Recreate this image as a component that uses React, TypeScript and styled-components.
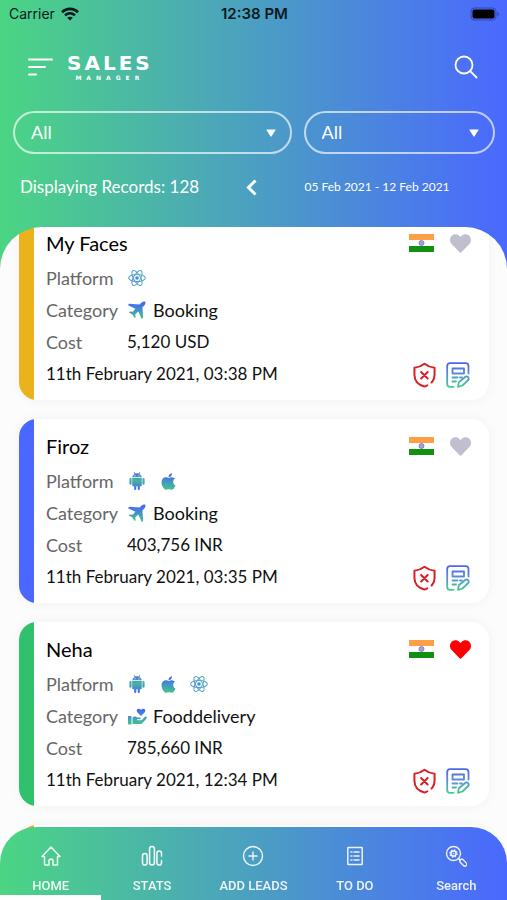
import React, { useLayoutEffect, useRef } from "react";
import styled, { createGlobalStyle } from "styled-components";
import { FaApple, FaHeart } from "react-icons/fa";

const GlobalStyle = createGlobalStyle`
  *, *::before, *::after { box-sizing: border-box; }
  body { margin: 0; }
  button, select { font: inherit; color: inherit; }
`;

const brandGradient = "linear-gradient(90deg, #4bd583 0%, #4b9dc4 52%, #4a68ff 100%)";
const textFont = `Lato, "Noto Sans", sans-serif`;
const systemFont = `Inter, "Liberation Sans", sans-serif`;

const Screen = styled.div`
  display: flex;
  flex-direction: column;
  height: 100vh;
  background: ${brandGradient};
  font-family: ${textFont};
  color: #111;
`;

const StatusBar = styled.div`
  display: grid;
  grid-template-columns: 1fr auto 1fr;
  align-items: center;
  height: 28px;
  padding: 0 7px 0 9px;
  font: 400 14px/20px ${systemFont};
  color: #0b1a20;
`;

const Carrier = styled.span`
  display: flex;
  align-items: center;
  gap: 6px;
`;

const Clock = styled.time`
  font-size: 15px;
  font-weight: 600;
`;

const BatterySlot = styled.span`
  display: flex;
  justify-content: flex-end;
`;

const BrandRow = styled.header`
  display: flex;
  align-items: center;
  height: 78px;
  padding: 0 29px 0 28px;
  color: #fff;
`;

const IconButton = styled.button`
  display: flex;
  padding: 0;
  border: 0;
  background: none;
  cursor: pointer;
`;

const Logo = styled.div`
  display: flex;
  flex-direction: column;
  align-items: center;
  margin: 0 auto 0 14px;
  font-family: "DejaVu Sans", sans-serif;
  font-weight: 700;
`;

const LogoName = styled.span`
  font-size: 20px;
  line-height: 22px;
  letter-spacing: 3px;
`;

const LogoTag = styled.span`
  font-size: 6px;
  line-height: 8px;
  letter-spacing: 5px;
`;

const TwoColumns = styled.div`
  display: grid;
  grid-template-columns: 16fr 11fr;
  column-gap: 12px;
  padding: 0 12px 0 13px;
  color: #fff;
`;

const FilterRow = styled(TwoColumns)`
  padding-top: 5px;
`;

const InfoRow = styled(TwoColumns)`
  align-items: center;
  height: 66px;
  margin-bottom: 7px;
`;

const Filter = styled.label`
  display: grid;
  align-items: center;
  > * { grid-area: 1 / 1; }
  > svg {
    justify-self: end;
    margin-right: 16px;
    pointer-events: none;
  }
`;

const FilterSelect = styled.select`
  appearance: none;
  width: 100%;
  height: 43px;
  padding: 0 16px 2px;
  border: 2px solid rgba(255, 255, 255, 0.65);
  border-radius: 22px;
  background: transparent;
  font-size: 18px;
  line-height: 24px;
  cursor: pointer;
  option { color: #111; }
`;

const Records = styled.div`
  display: flex;
  align-items: center;
  justify-content: space-between;
  padding: 0 35px 0 7px;
  font-size: 17px;
  line-height: 24px;
`;

const DateRange = styled.div`
  padding-left: 1px;
  font-size: 12px;
  line-height: 16px;
`;

const List = styled.main`
  flex: 1;
  min-height: 0;
  margin-bottom: -38px;
  padding: 0 18px 56px 19px;
  display: flex;
  flex-direction: column;
  gap: 19px;
  overflow-y: auto;
  scrollbar-width: none;
  background: #fcfcfc;
  border-radius: 42px 42px 0 0;
`;

const Card = styled.article<{ $accent: string }>`
  flex: none;
  display: flex;
  flex-direction: column;
  gap: 3px;
  padding: 11px 18px 10px 27px;
  border-radius: 18px;
  background: linear-gradient(90deg, ${(p) => p.$accent} 15px, #fff 15px);
  box-shadow: 0 0 12px rgba(0, 0, 0, 0.05);
`;

const CardHead = styled.div`
  display: flex;
  align-items: center;
  height: 32px;
`;

const CardTitle = styled.h2`
  flex: 1;
  margin: 0;
  font-size: 20px;
  line-height: 32px;
  font-weight: 400;
  color: #000;
`;

const Favourite = styled(IconButton)<{ $on: boolean }>`
  margin-left: 16px;
  color: ${(p) => (p.$on ? "#ff0000" : "#bfbfcf")};
`;

const CardBody = styled.div`
  display: flex;
  align-items: flex-end;
`;

const Details = styled.div`
  flex: 1;
  font-size: 17px;
  line-height: 32px;
`;

const Facts = styled.dl`
  display: grid;
  grid-template-columns: 81px 1fr;
  grid-auto-rows: 32px;
  margin: 0;
`;

const FactName = styled.dt`
  color: #666;
  font-size: 18px;
`;

const FactValue = styled.dd`
  display: flex;
  align-items: center;
  margin: 0;
`;

const PlatformValue = styled(FactValue)`
  gap: 11px;
`;

const CategoryValue = styled(FactValue)`
  gap: 6px;
  font-size: 18px;
`;

const Actions = styled.div`
  display: flex;
  gap: 10px;
  padding: 0 1px 2px 0;
`;

const GlyphSlot = styled.span`
  display: flex;
  justify-content: center;
  width: 20px;
  > svg { fill: url(#fill-down); }
`;

const Nav = styled.nav`
  flex: none;
  z-index: 1;
  display: grid;
  grid-template-columns: repeat(5, 1fr);
  height: 73px;
  overflow: hidden;
  border-radius: 36px 36px 0 0;
  background: ${brandGradient};
`;

const NavLink = styled.a<{ $active?: boolean }>`
  display: flex;
  flex-direction: column;
  align-items: center;
  gap: 11px;
  padding-top: 18px;
  border-bottom: 5px solid ${(p) => (p.$active ? "#fff" : "transparent")};
  color: rgba(255, 255, 255, 0.9);
  font: 500 13px/16px Roboto, sans-serif;
  text-decoration: none;
  white-space: nowrap;
`;

const Defs = styled.svg`
  position: absolute;
`;

const GradientDefs = () => (
  <Defs width="0" height="0" aria-hidden>
    <defs>
      <linearGradient id="fill-down" x1="0" y1="0" x2="0" y2="1">
        <stop offset="0.1" stopColor="#4768f5" />
        <stop offset="1" stopColor="#42c88c" />
      </linearGradient>
      <linearGradient id="fill-band" x1="0" y1="0" x2="0" y2="1">
        <stop offset="0" stopColor="#4768f5" />
        <stop offset="0.45" stopColor="#45b59c" />
        <stop offset="1" stopColor="#4768f5" />
      </linearGradient>
      <linearGradient id="line-up" gradientUnits="userSpaceOnUse" x1="0" y1="0" x2="0" y2="20">
        <stop offset="0" stopColor="#4fd39a" />
        <stop offset="1" stopColor="#5b78f5" />
      </linearGradient>
      <linearGradient id="line-down" gradientUnits="userSpaceOnUse" x1="0" y1="2" x2="0" y2="24">
        <stop offset="0" stopColor="#4d68ef" />
        <stop offset="0.4" stopColor="#5a86e0" />
        <stop offset="1" stopColor="#45c98e" />
      </linearGradient>
    </defs>
  </Defs>
);

const Wifi = () => (
  <svg width="18" height="14" viewBox="0 0 18 14" fill="none" stroke="currentColor" strokeWidth="2.6">
    <path d="M1 5.200C5.500.8 12.500.8 17 5.200" />
    <path d="M4 8.400c2.900-2.700 7.100-2.700 10 0" />
    <path d="M9 13.600 6.200 10.800c1.600-1.400 4-1.400 5.600 0z" fill="currentColor" stroke="none" />
  </svg>
);

const Battery = () => (
  <svg width="30" height="14" viewBox="0 0 30 14">
    <rect x="1" y="1" width="25" height="12" rx="3.5" fill="none" stroke="#1c2b8c" strokeOpacity="0.6" />
    <rect x="2.5" y="2.5" width="22" height="9" rx="2" fill="#000" />
    <path d="M27.500 5v4c1.800-.6 1.800-3.400 0-4z" fill="#1c2b8c" fillOpacity="0.7" />
  </svg>
);

const MenuLines = () => (
  <svg width="25" height="18" viewBox="0 0 25 18" fill="none" stroke="#fff" strokeWidth="2" strokeLinecap="round">
    <path d="M1 1.500h23M1 9h16M1 16.500h7" />
  </svg>
);

const Magnifier = () => (
  <svg width="24" height="24" viewBox="0 0 24 24" fill="none" stroke="#fff" strokeWidth="1.8" strokeLinecap="round">
    <circle cx="10" cy="10" r="8.5" />
    <path d="m16.200 16.200 6.300 6.300" />
  </svg>
);

const DropArrow = () => (
  <svg width="10" height="8" viewBox="0 0 10 8">
    <path d="M1 .5h8q.8 0 .4.800L5.600 7.300q-.6.800-1.200 0L.6 1.300Q.2.5 1 .5z" fill="#fff" />
  </svg>
);

const ChevronLeft = () => (
  <svg width="11" height="17" viewBox="0 0 11 17" fill="none" stroke="#fff" strokeWidth="3">
    <path d="M9.500 1.500 2.500 8.500l7 7" />
  </svg>
);

const Atom = () => (
  <svg width="20" height="18" viewBox="0 0 20 20" fill="none" stroke="url(#line-up)" strokeWidth="1.2">
    <ellipse cx="10" cy="10" rx="9.3" ry="3.8" />
    <ellipse cx="10" cy="10" rx="9.3" ry="3.8" transform="rotate(60 10 10)" />
    <ellipse cx="10" cy="10" rx="9.3" ry="3.8" transform="rotate(120 10 10)" />
    <circle cx="10" cy="10" r="2" fill="#4f86e6" stroke="none" />
  </svg>
);

const Robot = () => (
  <svg width="16" height="18" viewBox="0 0 16 18">
    <g fill="url(#fill-band)">
      <path d="M3.200 5.300A4.800 4.200 0 0 1 5.600 1.900L4.700.5l.6-.4 1 1.500q1.700-.6 3.400 0l1-1.500.6.4-.9 1.400a4.800 4.200 0 0 1 2.400 3.400zM5.500 3.300v.9h.9v-.9zM9.600 3.300v.9h.9v-.9zM3.200 6h9.600v7.300q0 1-1 1h-.9v2.500q0 1.200-1.100 1.200t-1.100-1.200v-2.500H7.300v2.500Q7.300 18 6.200 18t-1.100-1.200v-2.500h-.9q-1 0-1-1zM.4 7.200Q.4 6 1.500 6t1.100 1.200v4.400q0 1.200-1.100 1.200T.4 11.600zM13.400 7.200q0-1.200 1.100-1.200t1.100 1.200v4.400q0 1.200-1.100 1.200t-1.100-1.200z" fillRule="evenodd" />
    </g>
  </svg>
);

const Plane = () => (
  <svg width="18" height="18" viewBox="0 0 18 18">
    <path d="M17.300.7c-1.400-.6-3 .2-4.200 1.400l-1.600 1.500L1 2.800 0 4.300l7.400 3.400-2.600 3-3-.3-.9 1 3.200 1.800.7.700 1.800 3.200 1-.9-.3-3 3-2.600 3.400 7.400 1.500-1-.8-10.500 1.500-1.600c1.200-1.200 2-2.800 1.400-4.200z" />
  </svg>
);

const HandHeart = () => (
  <svg width="19" height="17" viewBox="0 0 19 17">
    <path d="M0 8h3.500v8.500H0zM4.500 9.500q2.500-1.800 4.700 0h2.600q1.400.4.800 1.700H9v1h4.500L17 8.800q1.300-.7 1.900.5-.3 1.200-1.400 2.400L14 15.500q-.6.600-1.800.6H4.500zM13 8 9.200 4.200Q8 2.600 9.200 1.200 11 0 13 1.800 15 0 16.800 1.200 18 2.600 16.800 4.200z" />
  </svg>
);

const IndiaFlag = () => (
  <svg width="25" height="18" viewBox="0 0 25 18" role="img" aria-label="India">
    <path d="M0 0h25v6H0z" fill="#ff9f45" />
    <path d="M0 6h25v6H0z" fill="#fff" />
    <path d="M0 12h25v6H0z" fill="#129012" />
    <circle cx="12.5" cy="9" r="2.5" fill="#a4a4d4" stroke="#8585bd" />
  </svg>
);

const ShieldCross = () => (
  <svg width="23" height="26" viewBox="0 0 24 26" fill="none" stroke="#dc1f26" strokeWidth="2.1" strokeLinecap="round" strokeLinejoin="round">
    <path d="M15 23.700q-1.500 1-3 1.300C6.300 23.500 1.600 19.500 1.500 13V5.500Q7.500 4.700 12 1.200q4.500 3.500 10.500 4.300V13q0 4-2.300 6.800l-.9 1" />
    <path d="m8.500 9.800 6.800 6.800M15.300 9.800l-6.800 6.800" />
  </svg>
);

const EditNote = () => (
  <svg width="24" height="26" viewBox="0 0 24 26" fill="none" stroke="url(#line-down)" strokeWidth="1.8" strokeLinecap="round" strokeLinejoin="round">
    <path d="M22.500 11.500V4q0-2.800-2.800-2.800H4Q1.200 1.200 1.200 4v18q0 2.800 2.800 2.800h3.500" />
    <path d="M6.500 6.500h11.500v5H6.500zM6.500 15.500h5M14 15.500h2M6.500 19.500h3.500" />
    <path d="m12 24.800.8-4.600 6.700-5.500q1.500-.8 2.600.5t.2 2.800L16.500 23.500z" />
  </svg>
);

const HomeIcon = () => (
  <svg width="22" height="22" viewBox="0 0 22 22" fill="none" stroke="currentColor" strokeWidth="1.5" strokeLinejoin="round" strokeLinecap="round">
    <path d="M4.500 11.500H2L11 2l9 9.500h-2.500v8.500h-4.500v-5q-2-1.800-4 0v5H5.500q-1 0-1-1z" />
  </svg>
);

const StatsIcon = () => (
  <svg width="22" height="22" viewBox="0 0 22 22" fill="none" stroke="currentColor" strokeWidth="1.6" strokeLinecap="round">
    <rect x="1.5" y="8.5" width="4.6" height="11.5" rx="2.3" />
    <rect x="8.6" y="1.5" width="4.8" height="18.5" rx="2.4" />
    <path d="M20.500 11V8.300a2.300 2.300 0 0 0-4.600 0v9.400a2.300 2.300 0 0 0 4.600 0V15.500" />
  </svg>
);

const AddIcon = () => (
  <svg width="22" height="22" viewBox="0 0 22 22" fill="none" stroke="currentColor" strokeWidth="1.4">
    <circle cx="11" cy="11" r="9.5" />
    <path d="M11 6.500v9M6.500 11h9" />
  </svg>
);

const TodoIcon = () => (
  <svg width="22" height="22" viewBox="0 0 22 22" fill="none" stroke="currentColor" strokeWidth="1.5">
    <rect x="3.8" y="2.5" width="14.4" height="17" rx="0.5" />
    <path d="M9.500 7h6M9.500 11h6M9.500 15h6M6.500 7h2M6.500 11h2M6.500 15h2" />
  </svg>
);

const LeadSearchIcon = () => (
  <svg width="22" height="22" viewBox="0 0 22 22" fill="none" stroke="currentColor" strokeWidth="1.4">
    <circle cx="8.5" cy="8.5" r="7" />
    <circle cx="8.5" cy="8.5" r="2.6" strokeWidth="1.6" />
    <circle cx="8.5" cy="8.5" r="3.7" strokeDasharray="1.4 1.5" strokeWidth="1.2" />
    <circle cx="8.500" cy="8.500" r="0.8" fill="currentColor" stroke="none" />
    <path d="m13.500 13.500 2 2" />
    <rect x="14.3" y="15.8" width="8" height="3.8" rx="1.5" transform="rotate(45 18.3 17.7)" />
  </svg>
);

type Platform = "android" | "apple" | "react";
type Category = "Booking" | "Fooddelivery";
type Lead = {
  id: number;
  name: string;
  accent: string;
  platforms: Platform[];
  category: Category;
  cost: string;
  date: string;
  favourite: boolean;
};

const leads: Lead[] = [
  { id: 1, name: "My Faces", accent: "#ebb31b", platforms: ["react"], category: "Booking", cost: "5,120 USD", date: "11th February 2021, 03:38 PM", favourite: false },
  { id: 2, name: "Firoz", accent: "#4a68ff", platforms: ["android", "apple"], category: "Booking", cost: "403,756 INR", date: "11th February 2021, 03:35 PM", favourite: false },
  { id: 3, name: "Neha", accent: "#30c16c", platforms: ["android", "apple", "react"], category: "Fooddelivery", cost: "785,660 INR", date: "11th February 2021, 12:34 PM", favourite: true },
];

const platformIcons: Record<Platform, React.ReactNode> = {
  android: <Robot />,
  apple: <FaApple size={19} />,
  react: <Atom />,
};

const categoryIcons: Record<Category, React.ReactNode> = {
  Booking: <Plane />,
  Fooddelivery: <HandHeart />,
};

const LeadCard = ({ lead }: { lead: Lead }) => (
  <Card $accent={lead.accent}>
    <CardHead>
      <CardTitle>{lead.name}</CardTitle>
      <IndiaFlag />
      <Favourite $on={lead.favourite} aria-label="Favourite" aria-pressed={lead.favourite}>
        <FaHeart size={21} />
      </Favourite>
    </CardHead>
    <CardBody>
      <Details>
        <Facts>
          <FactName>Platform</FactName>
          <PlatformValue>
            {lead.platforms.map((kind) => (
              <React.Fragment key={kind}>
                {kind === "react" ? platformIcons[kind] : <GlyphSlot>{platformIcons[kind]}</GlyphSlot>}
              </React.Fragment>
            ))}
          </PlatformValue>
          <FactName>Category</FactName>
          <CategoryValue>
            <GlyphSlot>{categoryIcons[lead.category]}</GlyphSlot>
            {lead.category}
          </CategoryValue>
          <FactName>Cost</FactName>
          <FactValue>{lead.cost}</FactValue>
        </Facts>
        <time>{lead.date}</time>
      </Details>
      <Actions>
        <IconButton aria-label="Reject lead"><ShieldCross /></IconButton>
        <IconButton aria-label="Edit lead"><EditNote /></IconButton>
      </Actions>
    </CardBody>
  </Card>
);

const UpcomingCard = styled(Card)`
  min-height: 184px;
`;

const navItems = [
  { label: "HOME", icon: <HomeIcon /> },
  { label: "STATS", icon: <StatsIcon /> },
  { label: "ADD LEADS", icon: <AddIcon /> },
  { label: "TO DO", icon: <TodoIcon /> },
  { label: "Search", icon: <LeadSearchIcon /> },
];

export default function App() {
  const listRef = useRef<HTMLElement>(null);

  useLayoutEffect(() => {
    if (listRef.current) listRef.current.scrollTop = 11;
  }, []);

  return (
    <Screen>
      <GlobalStyle />
      <GradientDefs />
      <StatusBar>
        <Carrier>Carrier <Wifi /></Carrier>
        <Clock>12:38 PM</Clock>
        <BatterySlot><Battery /></BatterySlot>
      </StatusBar>
      <BrandRow>
        <IconButton aria-label="Menu"><MenuLines /></IconButton>
        <Logo>
          <LogoName>SALES</LogoName>
          <LogoTag>MANAGER</LogoTag>
        </Logo>
        <IconButton aria-label="Find"><Magnifier /></IconButton>
      </BrandRow>
      <FilterRow>
        <Filter>
          <FilterSelect aria-label="Status"><option>All</option></FilterSelect>
          <DropArrow />
        </Filter>
        <Filter>
          <FilterSelect aria-label="Type"><option>All</option></FilterSelect>
          <DropArrow />
        </Filter>
      </FilterRow>
      <InfoRow>
        <Records>
          <span>Displaying Records: 128</span>
          <IconButton aria-label="Previous week"><ChevronLeft /></IconButton>
        </Records>
        <DateRange>05 Feb 2021 - 12 Feb 2021</DateRange>
      </InfoRow>
      <List ref={listRef}>
        {leads.map((lead) => (
          <LeadCard key={lead.id} lead={lead} />
        ))}
        <UpcomingCard $accent="#ebb31b" aria-busy="true" />
      </List>
      <Nav>
        {navItems.map((item, index) => (
          <NavLink key={item.label} href="#" $active={index === 0}>
            {item.icon}
            {item.label}
          </NavLink>
        ))}
      </Nav>
    </Screen>
  );
}
